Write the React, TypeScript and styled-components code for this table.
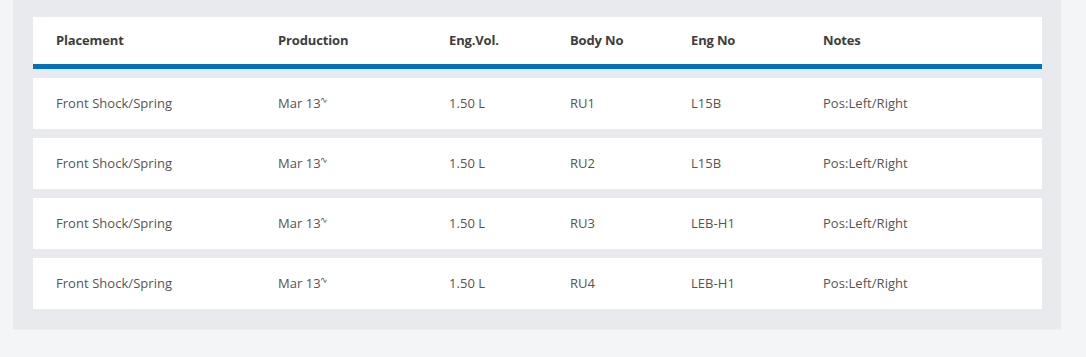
import React from "react";
import styled, { createGlobalStyle } from "styled-components";

const Global = createGlobalStyle`
  html, body { margin: 0; padding: 0; background: #f4f5f7; }
  body { font-family: "Open Sans", "Liberation Sans", sans-serif; }
`;

const Page = styled.div`
  width: 1086px;
  height: 357px;
  background: #f4f5f7;
  padding-left: 13px;
  box-sizing: border-box;
`;

const Panel = styled.div`
  width: 1049px;
  background: #e9eaee;
  border-right: 1px solid #eff0f2;
  border-bottom: 1px solid #eff0f2;
  box-sizing: border-box;
  padding: 17px 19px 20px 20px;
  display: flex;
  flex-direction: column;
  gap: 9px;
`;

const cols = "222px 171px 121px 121px 132px 1fr";

const HeaderRow = styled.div`
  display: grid;
  grid-template-columns: ${cols};
  align-items: center;
  height: 52px;
  padding-left: 23px;
  padding-bottom: 1px;
  box-sizing: border-box;
  background: #fff;
  border-bottom: 5px solid #0071bc;
`;

const HeadCell = styled.div`
  font-size: 13px;
  line-height: 16px;
  font-weight: 700;
  color: #3d3d3d;
  letter-spacing: -0.15px;
`;

const Row = styled.div`
  display: grid;
  grid-template-columns: ${cols};
  align-items: center;
  height: 51px;
  padding-left: 23px;
  padding-bottom: 2px;
  box-sizing: border-box;
  background: #fff;
`;

const Cell = styled.div`
  font-size: 13px;
  line-height: 16px;
  color: #555;
  letter-spacing: 0.05px;
`;

const Sup = styled.sup`
  font-size: 9px;
  vertical-align: 5px;
  line-height: 0;
  margin-left: -1px;
`;

const headers = ["Placement", "Production", "Eng.Vol.", "Body No", "Eng No", "Notes"];
const rows = [
  { body: "RU1", eng: "L15B" },
  { body: "RU2", eng: "L15B" },
  { body: "RU3", eng: "LEB-H1" },
  { body: "RU4", eng: "LEB-H1" },
];

export default function App() {
  return (
    <Page>
      <Global />
      <Panel>
        <HeaderRow>
          {headers.map((h) => (
            <HeadCell key={h}>{h}</HeadCell>
          ))}
        </HeaderRow>
        {rows.map((r) => (
          <Row key={r.body}>
            <Cell>Front Shock/Spring</Cell>
            <Cell>
              Mar 13<Sup>∿</Sup>
            </Cell>
            <Cell>1.50 L</Cell>
            <Cell>{r.body}</Cell>
            <Cell>{r.eng}</Cell>
            <Cell>Pos:Left/Right</Cell>
          </Row>
        ))}
      </Panel>
    </Page>
  );
}
